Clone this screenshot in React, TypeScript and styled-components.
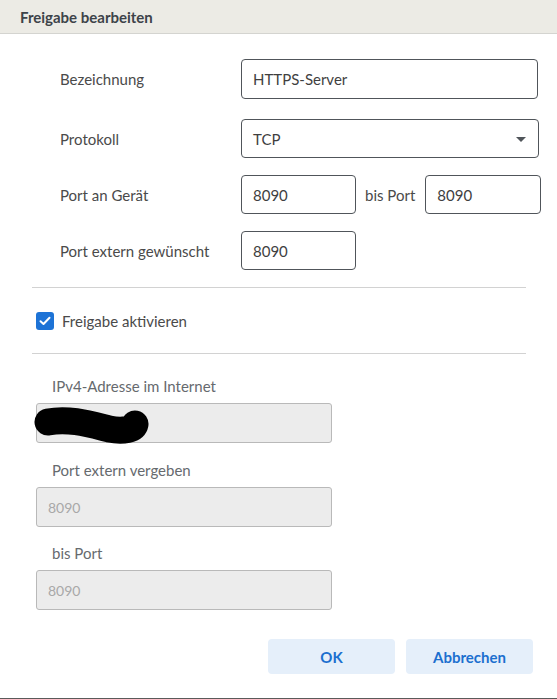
import React from "react";
import styled, { createGlobalStyle } from "styled-components";

const GlobalStyle = createGlobalStyle`
  html, body {
    margin: 0;
    padding: 0;
    background: #ffffff;
  }
  body {
    font-family: Lato, "Noto Sans", sans-serif;
    color: #4a4a4a;
  }
`;

const Dialog = styled.div`
  width: 557px;
  height: 699px;
  box-sizing: border-box;
  border-bottom: 1px solid #5a5a5a;
  display: flex;
  flex-direction: column;
  background: #fff;
`;

const Header = styled.div`
  height: 33px;
  background: #ecebe5;
  border-bottom: 1px solid #d4d4d0;
  display: flex;
  align-items: center;
  padding-left: 20px;
  font-size: 15px;
  font-weight: 700;
  color: #3d4349;
`;

const Body = styled.div`
  display: flex;
  flex-direction: column;
  padding: 0 0 0 32px;
`;

const Row = styled.div<{ $top: number; $h?: number }>`
  display: flex;
  align-items: center;
  margin-top: ${(p) => p.$top}px;
  height: ${(p) => p.$h ?? 39}px;
`;

const Label = styled.div`
  flex: 0 0 209px;
  padding-left: 28px;
  box-sizing: border-box;
  font-size: 15px;
  color: #4a4a4a;
  white-space: nowrap;
`;

const TextBox = styled.div<{ $w: number }>`
  flex: 0 0 ${(p) => p.$w}px;
  height: 100%;
  box-sizing: border-box;
  border: 1px solid #50555a;
  border-radius: 4px;
  display: flex;
  align-items: center;
  padding: 0 11px;
  font-size: 15px;
  color: #3f3f3f;
  position: relative;
`;

const Caret = styled.span`
  position: absolute;
  right: 12px;
  top: 17px;
  width: 0;
  height: 0;
  border-left: 5px solid transparent;
  border-right: 5px solid transparent;
  border-top: 5px solid #50555a;
`;

const Between = styled.span`
  font-size: 15px;
  color: #4a4a4a;
  margin: 0 10px 0 9px;
  white-space: nowrap;
`;

const Divider = styled.div<{ $top: number }>`
  width: 494px;
  height: 1px;
  background: #d2d2d2;
  margin-top: ${(p) => p.$top}px;
`;

const CheckRow = styled.label`
  display: flex;
  align-items: center;
  gap: 8px;
  margin-top: 24px;
  margin-left: 4px;
  height: 18px;
  font-size: 15px;
  color: #4a4a4a;
`;

const CheckBox = styled.span`
  width: 18px;
  height: 18px;
  border-radius: 3px;
  background: #1d73d6;
  display: flex;
  align-items: center;
  justify-content: center;
`;

const InfoLabel = styled.div<{ $top: number }>`
  margin-top: ${(p) => p.$top}px;
  padding-left: 20px;
  font-size: 15px;
  line-height: 20px;
  color: #666a6e;
`;

const ReadBox = styled.div`
  margin-top: 7px;
  margin-left: 4px;
  width: 296px;
  height: 40px;
  box-sizing: border-box;
  background: #ececec;
  border: 1px solid #b9b9b9;
  border-radius: 3px;
  display: flex;
  align-items: center;
  padding-left: 11px;
  font-size: 14px;
  color: #a8a8a8;
  position: relative;
`;

const Redaction = styled.svg`
  position: absolute;
  left: -3px;
  top: 3px;
`;

const Buttons = styled.div`
  display: flex;
  justify-content: flex-end;
  gap: 11px;
  margin-top: 29px;
  padding-right: 24px;
`;

const Button = styled.button`
  width: 127px;
  height: 35px;
  border: none;
  border-radius: 4px;
  background: #e5effa;
  color: #1c6fcf;
  font-family: Lato, "Noto Sans", sans-serif;
  font-size: 15px;
  font-weight: 700;
`;

export default function App() {
  return (
    <>
      <GlobalStyle />
      <Dialog>
        <Header>Freigabe bearbeiten</Header>
        <Body>
          <Row $top={25} $h={40}>
            <Label>Bezeichnung</Label>
            <TextBox $w={297}>HTTPS-Server</TextBox>
          </Row>
          <Row $top={20}>
            <Label>Protokoll</Label>
            <TextBox $w={298}>
              TCP
              <Caret />
            </TextBox>
          </Row>
          <Row $top={17}>
            <Label>Port an Gerät</Label>
            <TextBox $w={115}>8090</TextBox>
            <Between>bis Port</Between>
            <TextBox $w={116}>8090</TextBox>
          </Row>
          <Row $top={17}>
            <Label>Port extern gewünscht</Label>
            <TextBox $w={115}>8090</TextBox>
          </Row>
          <Divider $top={17} />
          <CheckRow>
            <CheckBox>
              <svg width="12" height="10" viewBox="0 0 12 10">
                <path d="M1.5 5.2 L4.5 8 L10.5 1.8" fill="none" stroke="#fff" strokeWidth="2" strokeLinecap="round" strokeLinejoin="round" />
              </svg>
            </CheckBox>
            Freigabe aktivieren
          </CheckRow>
          <Divider $top={23} />
          <InfoLabel $top={22}>IPv4-Adresse im Internet</InfoLabel>
          <ReadBox>
            <Redaction width="120" height="38" viewBox="0 0 120 38">
              <path d="M14 15 C 35 11, 55 17, 75 22 C 90 25, 100 22, 101 17" fill="none" stroke="#000" strokeWidth="27" strokeLinecap="round" />
            </Redaction>
          </ReadBox>
          <InfoLabel $top={17}>Port extern vergeben</InfoLabel>
          <ReadBox>8090</ReadBox>
          <InfoLabel $top={16}>bis Port</InfoLabel>
          <ReadBox>8090</ReadBox>
          <Buttons>
            <Button>OK</Button>
            <Button>Abbrechen</Button>
          </Buttons>
        </Body>
      </Dialog>
    </>
  );
}
